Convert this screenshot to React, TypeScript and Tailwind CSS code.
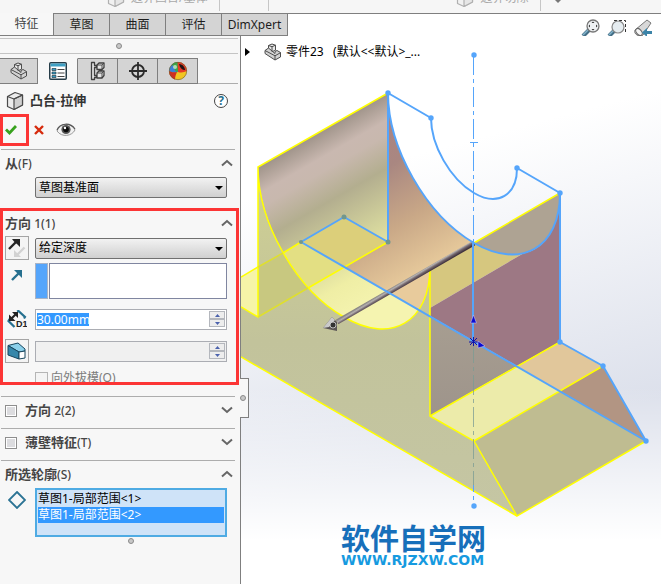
import { useState, type ReactNode } from "react";

const BLUE = "#55a5fb";
const YELLOW = "#ffff00";

function PartIcon() {
    return (
        <svg viewBox="0 0 18 18" className="h-[18px] w-[18px] shrink-0" stroke="#4d4d4d" strokeLinejoin="round" aria-hidden="true">
            <path d="M4.500 2.500 8 1l3.500 1.200v5L8 8.800 4.500 7.500z" fill="#e9e9e9" />
            <path d="M4.500 5 1 7.500v3L11 17l5.500-3V9.500L13 7.500l-2 1v2z" fill="#d2d2d2" />
            <path d="M1 7.500 11 12.800M11 17v-4.200l5.500-3.100M4.500 2.500 8 3.700l3.500-1.500M8 3.700v5" fill="none" />
        </svg>
    );
}

function BoxIcon() {
    return (
        <svg viewBox="0 0 18 20" className="h-5 w-[18px] shrink-0" stroke="#4a4a4a" strokeWidth="1.200" strokeLinejoin="round" aria-hidden="true">
            <path d="M1.500 5.500 9 1.500l7.500 2.500v10L8 18.500l-6.500-3z" fill="#ececec" />
            <path d="M8 8v10.500l8.500-4.500V4z" fill="#d0d0d0" />
            <path d="M1.500 5.500 8 8l8.500-4" fill="none" />
        </svg>
    );
}

function PropertyIcon() {
    return (
        <svg viewBox="0 0 18 18" className="h-[18px] w-[18px]" aria-hidden="true">
            <rect x=".75" y=".75" width="16.500" height="16.500" rx="1" fill="#fff" stroke="#263c48" strokeWidth="1.500" />
            <path d="M1.500 1.500h15v3h-15z" fill="#3fa0c4" />
            <path d="M3 6.500h4v2H3zM3 10h4v2H3zM3 13.500h4v2H3z" fill="#38a0c8" stroke="#263c48" strokeWidth=".7" />
            <path d="M8.500 7.500h7M8.500 11h7M8.500 14.500h7" stroke="#444" strokeWidth="1.200" />
        </svg>
    );
}

function ConfigIcon() {
    return (
        <svg viewBox="0 0 18 20" className="h-5 w-[18px]" fill="#e4e4e4" stroke="#3f3f3f" strokeWidth="1.300" strokeLinejoin="round" aria-hidden="true">
            <path d="M2.500 1.500h3v3h2v2h-2v8h2v2h-2v2h-3z" />
            <path d="m8 4 2-2h5v4.500l-2 2H8zM8 12l2-2h5v4.500l-2 2.500H8z" />
            <path d="M8 4h5v4.500M13 4l2-2M8 12h5v5M13 12l2-2" fill="none" strokeWidth=".9" />
        </svg>
    );
}

function TargetIcon() {
    return (
        <svg viewBox="0 0 20 20" className="h-5 w-5" fill="none" stroke="#2b2b2b" strokeWidth="1.800" aria-hidden="true">
            <circle cx="10" cy="10" r="6" />
            <path d="M10 1v18M1 10h18" />
        </svg>
    );
}

function AppearanceIcon() {
    return (
        <svg viewBox="0 0 20 20" className="h-5 w-5" aria-hidden="true">
            <circle cx="10" cy="10" r="9" fill="#f1c522" />
            <path d="M10 1A9 9 0 0 0 1 10c3 2 6 2 9 1z" fill="#3b80d8" />
            <path d="M4 3.300A9 9 0 0 1 10 1l1 9-3 1z" fill="#39a849" />
            <path d="M1 10a9 9 0 0 0 6 8.500c0-3 1-5 2-7.500-3 .5-5 .5-8-1z" fill="#cf2f20" />
            <path d="M10 11 9.500 1A9 9 0 0 1 19 10c-3 1.500-6 2-9 1z" fill="#e63a28" />
            <path d="M11 3c4 0 6 4 6 6-3 0-5-2-6-6z" fill="#201414" />
            <circle cx="7" cy="6" r="2" fill="#fff" opacity=".6" />
            <circle cx="10" cy="10" r="8.700" fill="none" stroke="#6b5a32" strokeWidth=".6" />
        </svg>
    );
}

function EyeIcon() {
    return (
        <svg viewBox="0 0 20 14" className="h-3.5 w-5" aria-hidden="true">
            <path d="M1 8c3-8 14-9 18-1-3 6-13 8-18 1z" fill="#f2f2f2" stroke="#999" />
            <path d="M1 7C4 0 14-1 19 6" fill="none" stroke="#555" strokeWidth="1.200" />
            <circle cx="10" cy="6.500" r="4.600" fill="#555" />
            <circle cx="10" cy="6.500" r="2.800" fill="#080808" />
            <circle cx="9" cy="5" r="1.200" fill="#fff" />
        </svg>
    );
}

function ReverseIcon() {
    return (
        <svg viewBox="0 0 20 20" className="h-5 w-5" aria-hidden="true">
            <path d="m17.500 9.500-7 7" stroke="#d2d2d2" strokeWidth="2.400" />
            <path d="M7 12v7h7l-2.500-2.500-2-2z" fill="#d2d2d2" />
            <path d="m2 11 8-8" stroke="#252525" strokeWidth="2.400" />
            <path d="M5 1h8v8l-2.500-2.500L7 3.500z" fill="#252525" />
        </svg>
    );
}

function DirectionIcon() {
    return (
        <svg viewBox="0 0 12 12" className="h-3 w-3" aria-hidden="true">
            <path d="m1 11 7-7" stroke="#26708f" strokeWidth="2.400" />
            <path d="M3 1h8v8L8 6 6 4z" fill="#26708f" />
        </svg>
    );
}

function DepthIcon() {
    return (
        <svg viewBox="0 0 20 18" className="h-[18px] w-5" aria-hidden="true">
            <path d="m10 1.500 1.500-.5L18 7l-1 1.500M2.500 9l-1 2 6 6" fill="none" stroke="#26708f" strokeWidth="2.200" />
            <path d="m4 9 5-5" stroke="#222" strokeWidth="2.200" />
            <path d="M2 4.500V11h6.500zM5 2h6v6z" fill="#222" />
            <text x="9" y="17" fontSize="9" fontWeight="700" fill="#222" fontFamily="Liberation Sans, sans-serif">
                D1
            </text>
        </svg>
    );
}

function DraftIcon() {
    return (
        <svg viewBox="0 0 20 18" className="h-[18px] w-5" stroke="#17465e" strokeLinejoin="round" aria-hidden="true">
            <path d="M1 3.500 11 1l7 6v2l-6 1z" fill="#8bd0ea" />
            <path d="M1 3.500V13l11 4v-7z" fill="#3687aa" />
            <path d="m12 10 6-1v7l-6 1z" fill="#fff" />
        </svg>
    );
}

function Chevron({ open }: { open: boolean }) {
    return (
        <svg viewBox="0 0 12 8" className="h-2 w-3" fill="none" stroke="#666" strokeWidth="2" aria-hidden="true">
            <path d={open ? "m1 6.500 5-4.500 5 4.500" : "m1 1.500 5 4.500 5-4.500"} />
        </svg>
    );
}

function Grip() {
    return <span className="block h-1.5 w-1.5 rounded-full border border-[#8a8a8a] bg-[#c8c8c8]" />;
}

type SectionTitleProps = {
    children: ReactNode;
    suffix: string;
    open: boolean;
    onToggle?: () => void;
};

function SectionTitle({ children, suffix, open, onToggle }: SectionTitleProps) {
    return (
        <button type="button" onClick={onToggle} aria-expanded={open} className="-mr-1.5 flex flex-1 items-center justify-between pb-0.5">
            <span className="text-[13px] leading-5 font-semibold text-[#454545]">
                {children}
                <span className="text-xs font-medium">{suffix}</span>
            </span>
            <Chevron open={open} />
        </button>
    );
}

function Picker({ label, options }: { label: string; options: string[] }) {
    return (
        <div className="relative flex h-[21px] min-w-0 flex-1">
            <select
                aria-label={label}
                className="block h-full w-full appearance-none rounded-xs border border-[#707070] bg-linear-to-b from-[#f2f2f2] to-[#d0d0d0] pl-[3px] text-xs text-black"
            >
                {options.map((option) => (
                    <option key={option}>{option}</option>
                ))}
            </select>
            <svg viewBox="0 0 8 4" className="pointer-events-none absolute top-[9px] right-1 h-1 w-2" aria-hidden="true">
                <path d="M0 0h8L4 4z" />
            </svg>
        </div>
    );
}

function Spinner({ label, disabled, children }: { label: string; disabled?: boolean; children: ReactNode }) {
    return (
        <div className={`flex h-[21px] min-w-0 flex-1 items-center justify-between border border-[#abadb3] pr-px ${disabled ? "bg-[#f0f0f0]" : "bg-white"}`}>
            {children}
            <div className="flex flex-col">
                {["增加", "减少"].map((name, i) => (
                    <button
                        key={name}
                        type="button"
                        disabled={disabled}
                        aria-label={`${label}${name}`}
                        className="flex h-2 w-4 items-center justify-center border border-[#b4b7bd] bg-[#ededed]"
                    >
                        <svg viewBox="0 0 5 3" className="h-[3px] w-[5px]" fill="#4b62ad" aria-hidden="true">
                            <path d={i === 0 ? "M0 3h5L2.500 0z" : "M0 0h5L2.500 3z"} />
                        </svg>
                    </button>
                ))}
            </div>
        </div>
    );
}

function Ribbon() {
    return (
        <div className="flex h-3.5 items-start overflow-hidden border-b border-[#7f7f7f] bg-[#f6f6f6] pl-[107px] text-xs leading-5 text-[#a9a9a9]">
            <button type="button" disabled className="-mt-3 flex items-center gap-1.5">
                <span className="opacity-40">
                    <BoxIcon />
                </span>
                边界凸台/基体
            </button>
            <div className="ml-3 h-[11px] w-[50px] border-x border-[#c6c6c6]" />
            <button type="button" disabled className="-mt-3 ml-[187px] flex items-center gap-1.5">
                <span className="opacity-40">
                    <BoxIcon />
                </span>
                边界切除
            </button>
            <div className="ml-3 h-[11px] border-l border-[#c6c6c6]" />
            <svg viewBox="0 0 6 3" className="ml-3.5 h-[3px] w-1.5" fill="#777" aria-hidden="true">
                <path d="M0 0h6L3 3z" />
            </svg>
        </div>
    );
}

const commandTabs = ["草图", "曲面", "评估"];

function CommandTabs() {
    return (
        <div className="-mt-px flex h-[23px] text-xs text-[#1d1d1d]">
            <button type="button" className="w-[53px] border-b border-[#7f7f7f] bg-[#f7f7f7] text-[#444]">
                特征
            </button>
            {commandTabs.map((tab) => (
                <button key={tab} type="button" className="w-14 border border-r-0 border-[#7f7f7f] bg-[#d4d4d4]">
                    {tab}
                </button>
            ))}
            <button type="button" className="w-[67px] border border-[#7f7f7f] bg-[#d4d4d4]">
                DimXpert
            </button>
            <div className="mt-px flex flex-1 items-start justify-end gap-1.5 bg-white pt-1 pr-2">
                <button type="button" aria-label="整屏显示全图">
                    <svg viewBox="0 0 20 20" className="h-5 w-5" aria-hidden="true">
                        <path d="m2 18 6-6" stroke="#456f87" strokeWidth="4" />
                        <path d="m2 17 6-6" stroke="#82b4cc" strokeWidth="1.500" />
                        <circle cx="12" cy="8" r="6" fill="#eef1f3" stroke="#777" strokeWidth="1.300" />
                        <path d="m12 3.500 1.500 1.500h-3zM12 12.500l1.500-1.500h-3zM7.500 8 9 6.500v3zM16.500 8 15 6.500v3z" fill="#333" />
                    </svg>
                </button>
                <button type="button" aria-label="局部放大">
                    <svg viewBox="0 0 20 20" className="h-5 w-5" aria-hidden="true">
                        <path d="M7 2.500h11.500v12" fill="none" stroke="#333" strokeDasharray="3 2" />
                        <path d="m2 18 5-5" stroke="#456f87" strokeWidth="4" />
                        <path d="m2 17 5-5" stroke="#82b4cc" strokeWidth="1.500" />
                        <circle cx="11" cy="9" r="6" fill="#e6edf1" stroke="#888" strokeWidth="1.200" />
                    </svg>
                </button>
                <button type="button" aria-label="上一视图">
                    <svg viewBox="0 0 20 20" className="h-5 w-5" aria-hidden="true">
                        <path d="M2 12 14 2l4 3-8 12c-3 3-10-1-8-5z" fill="#d8d8d8" stroke="#777" />
                        <ellipse cx="6" cy="14" rx="2.500" ry="4" transform="rotate(-40 6 14)" fill="#f6f6f6" stroke="#666" />
                        <path d="M9 14.500 14 10v3h5v3h-5v3z" fill="#3c84a8" />
                    </svg>
                </button>
            </div>
        </div>
    );
}

const managerTabs = [
    { name: "设计树", icon: <PartIcon /> },
    { name: "属性", icon: <PropertyIcon /> },
    { name: "配置", icon: <ConfigIcon /> },
    { name: "尺寸专家", icon: <TargetIcon /> },
    { name: "外观", icon: <AppearanceIcon /> },
];

function PropertyPanel() {
    const [selected, setSelected] = useState(1);
    const [direction2, setDirection2] = useState(false);
    const [thin, setThin] = useState(false);
    const contours = ["草图1-局部范围<1>", "草图1-局部范围<2>"];

    return (
        <aside className="relative z-10 w-[241px] shrink-0 border-r border-[#7f7f7f] bg-[#f7f7f7] pt-0.5 pb-10">
            <div className="mr-0.5 flex h-4 items-center justify-center border-y border-[#c4c4c4]">
                <Grip />
            </div>
            <div role="tablist" className="mt-1 mr-0.5 flex h-[26px]">
                {managerTabs.map(({ name, icon }) => (
                    <button
                        key={name}
                        type="button"
                        role="tab"
                        aria-label={name}
                        aria-selected={name === "属性"}
                        className="flex w-10 items-center justify-center border border-l-0 border-[#7f7f7f] bg-[#d4d4d4] first:w-[38px] aria-selected:border-y-transparent aria-selected:bg-[#f7f7f7]"
                    >
                        {icon}
                    </button>
                ))}
                <div className="flex-1 border-b border-[#adadad]" />
            </div>

            <div className="flex h-[30px] items-center gap-1.5 pt-1 pr-3 pl-1.5">
                <BoxIcon />
                <h1 className="flex-1 text-[13px] font-semibold text-[#333]">凸台-拉伸</h1>
                <button
                    type="button"
                    aria-label="帮助"
                    className="h-3.5 w-3.5 rounded-full border border-[#444] bg-white text-center text-xs leading-3 font-bold text-[#26708f]"
                >
                    ?
                </button>
            </div>
            <div className="flex h-8 items-center">
                <button type="button" aria-label="确定" className="flex h-8 w-[29px] items-center border-[3px] border-[#fc3535] pl-0.5">
                    <svg viewBox="0 0 12 10" className="h-2.5 w-3" fill="none" stroke="#38a21e" strokeWidth="2.800" aria-hidden="true">
                        <path d="m1 4.500 3.500 3.500L11 1" />
                    </svg>
                </button>
                <button type="button" aria-label="取消" className="ml-[5px]">
                    <svg viewBox="0 0 10 10" className="h-2.5 w-2.5" stroke="#d62a0c" strokeWidth="2.400" aria-hidden="true">
                        <path d="m1 1 8 8M9 1 1 9" />
                    </svg>
                </button>
                <button type="button" aria-label="细节预览" className="ml-3">
                    <EyeIcon />
                </button>
            </div>

            <section className="mt-[3px] mr-[5px] ml-px border-t border-[#adadad] pr-2 pb-2.5 pl-1">
                <div className="flex h-[27px]">
                    <SectionTitle suffix="(F)" open>
                        从
                    </SectionTitle>
                </div>
                <div className="flex pl-[30px]">
                    <Picker label="开始条件" options={["草图基准面", "曲面/面/基准面", "顶点", "等距"]} />
                </div>
            </section>

            <section className="mr-px flex h-[177px] flex-col overflow-hidden border-[3px] border-[#fc3535] pr-[9px] pl-0.5">
                <div className="flex h-[25px] shrink-0">
                    <SectionTitle suffix=" 1(1)" open>
                        方向
                    </SectionTitle>
                </div>
                <div className="flex h-6 shrink-0 items-center gap-1.5">
                    <button type="button" aria-label="反向" className="flex h-6 w-6 items-center justify-center border border-[#a5a5a5] bg-[#f4f4f4]">
                        <ReverseIcon />
                    </button>
                    <Picker label="终止条件" options={["给定深度", "完全贯穿", "两侧对称"]} />
                </div>
                <div className="mt-[3px] flex h-9 shrink-0 gap-1.5">
                    <div className="flex h-6 w-6 items-center justify-center">
                        <DirectionIcon />
                    </div>
                    <div className="flex flex-1 gap-px">
                        <div className="w-[13px] border border-[#a9b4c6] bg-[#55a5fb]" />
                        <div role="listbox" aria-label="拉伸方向" className="flex-1 border border-[#8086a0] bg-white" />
                    </div>
                </div>
                <div className="mt-2 flex h-6 shrink-0 items-center gap-1.5">
                    <div className="flex w-6 justify-center">
                        <DepthIcon />
                    </div>
                    <Spinner label="深度">
                        <input aria-label="深度" defaultValue="30.00mm" className="ml-px h-[13px] w-[52px] bg-[#3399ff] text-xs leading-3 text-white outline-none" />
                    </Spinner>
                </div>
                <div className="mt-2 flex h-6 shrink-0 items-center gap-1.5">
                    <button type="button" aria-label="拔模开/关" className="flex h-6 w-6 items-center justify-center border border-[#a5a5a5] bg-[#f4f4f4]">
                        <DraftIcon />
                    </button>
                    <Spinner label="拔模角度" disabled>
                        <input aria-label="拔模角度" disabled className="h-[13px] min-w-0 flex-1 bg-transparent text-xs" />
                    </Spinner>
                </div>
                <label className="mt-1.5 flex shrink-0 items-center gap-[3px] pl-[30px] text-xs leading-[18px] text-[#7c7c7c]">
                    <input type="checkbox" disabled className="h-[13px] w-[13px] appearance-none border border-[#b5b5b5] bg-[#f4f4f4]" />
                    向外拔模(O)
                </label>
            </section>

            <div className="mt-[11px] mr-[5px] ml-px">
                <section className="flex h-8 items-center gap-2 border-t border-[#adadad] pr-2 pb-1 pl-1">
                    <input
                        type="checkbox"
                        aria-label="方向 2"
                        checked={direction2}
                        onChange={() => setDirection2(!direction2)}
                        className="h-3 w-3 appearance-none border border-[#8e8e8e] bg-[#dcdcdf] outline-1 -outline-offset-2 outline-white checked:bg-[#55a5fb]"
                    />
                    <SectionTitle suffix=" 2(2)" open={direction2} onToggle={() => setDirection2(!direction2)}>
                        方向
                    </SectionTitle>
                </section>
                <section className="flex h-8 items-center gap-2 border-t border-[#adadad] pr-2 pb-1 pl-1">
                    <input
                        type="checkbox"
                        aria-label="薄壁特征"
                        checked={thin}
                        onChange={() => setThin(!thin)}
                        className="h-3 w-3 appearance-none border border-[#8e8e8e] bg-[#dcdcdf] outline-1 -outline-offset-2 outline-white checked:bg-[#55a5fb]"
                    />
                    <SectionTitle suffix="(T)" open={thin} onToggle={() => setThin(!thin)}>
                        薄壁特征
                    </SectionTitle>
                </section>
                <section className="border-t border-[#adadad] pr-2 pl-1">
                    <div className="flex h-[27px]">
                        <SectionTitle suffix="(S)" open>
                            所选轮廓
                        </SectionTitle>
                    </div>
                    <div className="flex gap-1.5">
                        <div className="flex h-6 w-6 items-center justify-center">
                            <svg viewBox="0 0 18 18" className="h-[18px] w-[18px]" fill="none" stroke="#2b7394" strokeWidth="1.800" aria-hidden="true">
                                <path d="m9 1 8 8-8 8-8-8z" />
                            </svg>
                        </div>
                        <ul role="listbox" aria-label="所选轮廓" className="h-[49px] flex-1 border-2 border-[#4fabe3] bg-[#cfe3f8] p-px text-xs leading-4">
                            {contours.map((contour, i) => (
                                <li
                                    key={contour}
                                    role="option"
                                    aria-selected={i === selected}
                                    onClick={() => setSelected(i)}
                                    className="h-4 text-black aria-selected:bg-[#3399ff] aria-selected:text-white"
                                >
                                    {contour}
                                </li>
                            ))}
                        </ul>
                    </div>
                    <div className="mt-px flex justify-center pl-[30px]">
                        <Grip />
                    </div>
                </section>
            </div>

            <div className="absolute top-[342px] -right-[9px] flex h-10 w-[9px] items-center border border-l-0 border-[#7f7f7f] bg-[#f7f7f7]">
                <Grip />
            </div>
        </aside>
    );
}

const sketchPoints = [
    [474, 55],
    [388, 93],
    [431, 118],
    [517, 168],
    [560, 193],
    [560, 342],
    [603, 366],
    [646, 441],
    [474, 506],
];

function Model() {
    return (
        <svg viewBox="241 36 420 548" preserveAspectRatio="xMinYMin meet" className="absolute inset-0 h-full w-full" aria-label="拉伸预览">
            <defs>
                <linearGradient id="bore" gradientUnits="userSpaceOnUse" x1="323" y1="130" x2="413" y2="286">
                    <stop offset="0" stopColor="#a0948a" />
                    <stop offset=".13" stopColor="#c9b8b0" />
                    <stop offset=".2" stopColor="#c8b8ae" />
                    <stop offset=".36" stopColor="#b3ae8f" />
                    <stop offset=".6" stopColor="#d3d39c" />
                    <stop offset=".8" stopColor="#efeea5" />
                    <stop offset="1" stopColor="#f5f4b0" />
                </linearGradient>
                <linearGradient id="boreBack" gradientUnits="userSpaceOnUse" x1="378" y1="140" x2="448" y2="261">
                    <stop offset="0" stopColor="#ab8582" />
                    <stop offset=".2" stopColor="#a98781" />
                    <stop offset=".6" stopColor="#c9a887" />
                    <stop offset="1" stopColor="#e8cb9c" />
                </linearGradient>
                <linearGradient id="face" x1="0" y1="0" x2="0" y2="1">
                    <stop offset="0" stopColor="#cfd092" />
                    <stop offset=".5" stopColor="#c2c39b" />
                    <stop offset="1" stopColor="#c5c6a4" />
                </linearGradient>
                <linearGradient id="web" x1="0" y1="0" x2="0" y2="1">
                    <stop offset="0" stopColor="#a79e91" />
                    <stop offset="1" stopColor="#9e948b" />
                </linearGradient>
                <linearGradient id="rod" gradientUnits="userSpaceOnUse" x1="404" y1="280" x2="407" y2="285">
                    <stop offset="0" stopColor="#8a8784" />
                    <stop offset=".3" stopColor="#b4b0b0" />
                    <stop offset=".6" stopColor="#75696f" />
                    <stop offset="1" stopColor="#40333f" />
                </linearGradient>
            </defs>

            {/* solid faces, back to front */}
            <path d="M241 277 301 242h87L258 317l-17-10z" fill="#f6f4a8" />
            <path d="M258 167 388 93C388 148 426 215 474 243L430 267C430 322 391 345 344 317 296 290 258 222 258 167z" fill="url(#bore)" />
            <path d="M388 93C388 148 426 215 474 243L430 267C430 285 427 300 420 311L345 267 388 242z" fill="url(#boreBack)" />
            <path d="M301 242 344 217 388 242 345 267z" fill="#dccf7a" />
            <path d="M283 253 301 242 345 267 308 288C298 277 290 266 283 253z" fill="#e3df83" />
            <path d="M258 167C258 222 296 290 344 317 391 345 430 322 430 267V416L474 441 517 516 241 357V307L258 317z" fill="url(#face)" />
            <path d="M258 267 283 253C290 266 298 277 308 288L258 317z" fill="#c8c880" />

            <path d="M474 243 560 193C560 248 521 270 474 243z" fill="#aea393" />
            <path d="M430 267 474 243C492 253 508 256 524 253L430 308z" fill="#d6c77f" />
            <path d="M430 308 524 253C545 250 560 225 560 193V342L517 366 430 316z" fill="#9d7884" />
            <path d="M430 316 517 366 430 416z" fill="url(#web)" />
            <path d="M430 416 517 366 560 391 474 441z" fill="#ecebaa" />
            <path d="M517 366 560 342 603 366 560 391z" fill="#e1c79b" />
            <path d="M474 441 560 391 646 441 517 516z" fill="#bfbc91" />
            <path d="M560 391 603 366 646 441z" fill="#b29583" />

            <g fill="none" stroke={YELLOW} strokeWidth="1.500">
                <path d="M388 93 258 167V317L241 307M258 167C258 222 296 290 344 317 391 345 430 322 430 267V416L474 441 517 516 646 441M517 516 241 357" />
                <path d="M474 243 560 193M430 416 560 342M474 441 603 366M241 277 258 267M301 242 283 253M388 242 308 288" />
                <path d="M283 253 258 267M308 288 258 317" stroke="#dfdf2d" />
            </g>

            {/* extrude direction handle */}
            <path d="M474 243 337 322" stroke="url(#rod)" strokeWidth="5" />
            <path d="m323 328 9-11 5 5v9z" fill="#5a5555" />
            <path d="m323 328 9-11 3 3-6 7z" fill="#c9c9c9" />
            <circle cx="333" cy="325" r="3" fill="#333" stroke="#ddd" strokeWidth=".8" />

            <g fill="none" stroke={BLUE} strokeWidth="2" strokeLinejoin="round">
                <path d="M388 242V93L431 118C431 145 450 179 474 193 498 207 517 195 517 168L560 193V342L603 366 646 441 301 242 344 217 388 242" />
                <path d="M388 93C388 148 426 215 474 243 521 270 560 248 560 193M473 243V341" />
                <path d="M470 142.500h8" strokeWidth="1" />
            </g>
            <path d="M473.500 55V243" stroke={BLUE} strokeDasharray="20 4 4 4" />
            <path d="M473.500 343V485" stroke="#7b9c94" strokeDasharray="20 4 4 4" opacity=".75" />
            <path d="M473.500 485V506" stroke={BLUE} strokeDasharray="7 4 4 4" />
            <g fill={BLUE}>
                {sketchPoints.map(([x, y]) => (
                    <circle key={`${x}-${y}`} cx={x} cy={y} r="2.700" />
                ))}
            </g>
            <g fill="#71978e">
                <circle cx="344" cy="217" r="2.500" />
                <circle cx="301" cy="242" r="2" />
                <circle cx="388" cy="242" r="2.500" />
            </g>
            <path d="M469 342h9M473.500 337v9M470 338l7 7M477 338l-7 7" stroke="#1212a8" />
            <path d="m473.500 315 3 8h-6zM478 341l7 5-7 2z" fill="#0c0cd2" stroke="#c9c4e8" strokeWidth=".6" />
        </svg>
    );
}

function Viewport() {
    return (
        <main className="relative min-h-[548px] min-w-0 flex-1 overflow-hidden bg-[linear-gradient(to_bottom,transparent_64%,#ffffff_92%),linear-gradient(165deg,#ffffff_25%,#dce0eb_72%)]">
            <Model />
            <div className="relative flex h-8 items-center pl-1 text-xs text-black">
                <svg viewBox="0 0 5 8" className="h-2 w-[5px]" aria-hidden="true">
                    <path d="m0 0 5 4-5 4z" />
                </svg>
                <span className="ml-3.5">
                    <PartIcon />
                </span>
                <span className="ml-1 whitespace-pre">零件23   (默认&lt;&lt;默认&gt;_...</span>
            </div>
            <div className="absolute bottom-4 left-[100px] flex flex-col whitespace-nowrap">
                <strong className="font-['Liberation_Sans','Noto_Sans_CJK_SC',sans-serif] text-[29px] leading-6 font-bold text-[#176fba]">软件自学网</strong>
                <a href="#home" className="font-['DejaVu_Sans',sans-serif] text-sm leading-4 font-bold text-[#169ae0]">
                    WWW.RJZXW.COM
                </a>
            </div>
        </main>
    );
}

function App() {
    return (
        <div className="flex min-h-screen flex-col bg-white font-['Noto_Sans','Noto_Sans_CJK_SC',sans-serif]">
            <Ribbon />
            <CommandTabs />
            <div className="flex flex-1">
                <PropertyPanel />
                <Viewport />
            </div>
        </div>
    );
}

export default App;
